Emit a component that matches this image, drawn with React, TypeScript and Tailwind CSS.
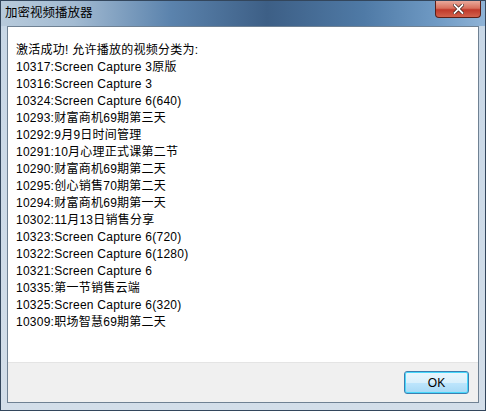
const lines = [
  "激活成功! 允许播放的视频分类为:",
  "10317:Screen Capture 3原版",
  "10316:Screen Capture 3",
  "10324:Screen Capture 6(640)",
  "10293:财富商机69期第三天",
  "10292:9月9日时间管理",
  "10291:10月心理正式课第二节",
  "10290:财富商机69期第二天",
  "10295:创心销售70期第二天",
  "10294:财富商机69期第一天",
  "10302:11月13日销售分享",
  "10323:Screen Capture 6(720)",
  "10322:Screen Capture 6(1280)",
  "10321:Screen Capture 6",
  "10335:第一节销售云端",
  "10325:Screen Capture 6(320)",
  "10309:职场智慧69期第二天",
];

export default function App() {
  return (
    <div
      className="w-[486px] h-[411px] flex flex-col border border-[#33465c] bg-[linear-gradient(180deg,#b9cde0_0px,#c8d7e6_30px,#d3dee9_100%)] overflow-hidden"
      style={{ fontFamily: '"Liberation Sans", "Noto Sans CJK SC", sans-serif' }}
    >
      <div className="h-[25px] shrink-0 flex items-start justify-between bg-[linear-gradient(90deg,#b7cadb_0%,#a3bbd2_15%,#5b83ad_35%,#3d5f86_55%,#4f7aa6_75%,#6f9ac4_90%,#8fb3d6_100%)]">
        <span className="pl-[4px] pt-[4px] text-[12.5px] leading-[16px] text-black">加密视频播放器</span>
        <div className="mr-[4px] w-[46px] h-[17px] rounded-b-[4px] border border-t-0 border-[#5a1f18] bg-[linear-gradient(180deg,#e9a99b_0%,#d8705d_45%,#c0392a_55%,#d2614c_100%)] flex items-center justify-center">
          <svg width="11" height="10" viewBox="0 0 11 10">
            <path d="M1.5 1 L9.5 9 M9.5 1 L1.5 9" stroke="#3a1a14" strokeWidth="3.2" strokeLinecap="square" />
            <path d="M1.5 1 L9.5 9 M9.5 1 L1.5 9" stroke="#ffffff" strokeWidth="1.8" strokeLinecap="square" />
          </svg>
        </div>
      </div>
      <div className="flex-1 flex flex-col px-[6px] pb-[7px]">
        <div className="flex-1 flex flex-col border border-[#6f8193]">
          <div className="flex-1 bg-white pl-[8px] pt-[15px]">
            {lines.map((l) => (
              <div key={l} className="text-[12px] leading-[17px] tracking-[0.25px] text-black whitespace-nowrap">
                {l}
              </div>
            ))}
          </div>
          <div className="h-[40px] shrink-0 bg-[#f0f0f0] border-t border-[#e4e4e4] flex items-center justify-end pr-[9px]">
            <button className="w-[65px] h-[23px] rounded-[3px] border border-[#3c7fb1] bg-[linear-gradient(180deg,#eaf6fd_0%,#d9f0fc_50%,#bee6fd_51%,#a7d9f5_100%)] text-[12px] text-black shadow-[inset_0_0_0_1px_#48d8fb]">
              OK
            </button>
          </div>
        </div>
      </div>
    </div>
  );
}
